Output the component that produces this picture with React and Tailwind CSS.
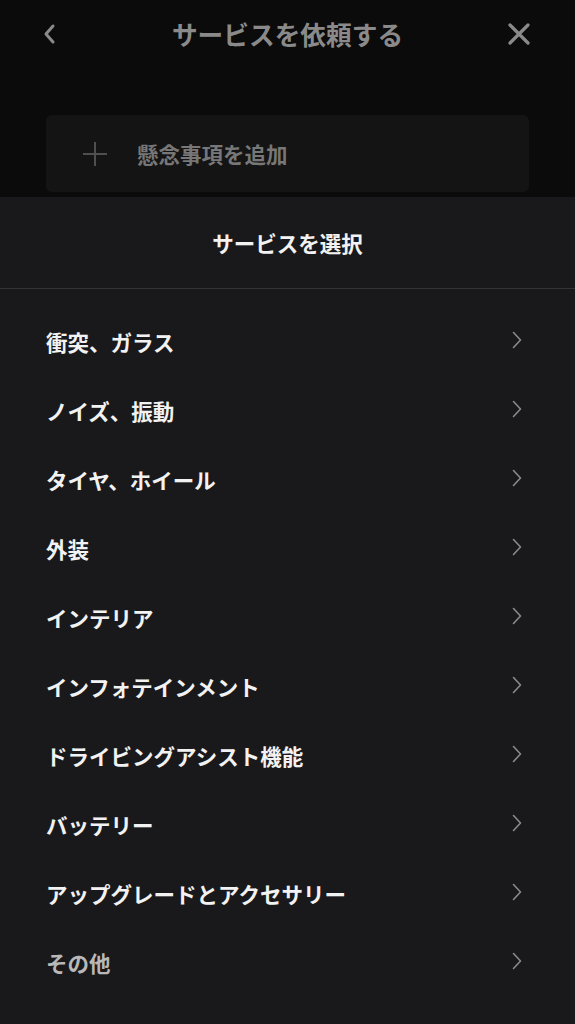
import React from "react";

const items = [
  "衝突、ガラス",
  "ノイズ、振動",
  "タイヤ、ホイール",
  "外装",
  "インテリア",
  "インフォテインメント",
  "ドライビングアシスト機能",
  "バッテリー",
  "アップグレードとアクセサリー",
  "その他",
];

function Chevron() {
  return (
    <svg width="12" height="18" viewBox="0 0 12 18" fill="none">
      <path d="M2.5 1.5 L9.5 9 L2.5 16.5" stroke="#8a8a8c" strokeWidth="1.6" strokeLinecap="round" strokeLinejoin="round" />
    </svg>
  );
}

export default function App() {
  const font = { fontFamily: '"Noto Sans CJK JP", "Noto Sans", sans-serif' };
  return (
    <div className="w-[575px] h-[1024px] overflow-hidden bg-[#0b0b0b] flex flex-col" style={font}>
      <div className="h-[68px] grid grid-cols-[24px_1fr_24px] items-center px-[42px]">
        <svg width="16" height="22" viewBox="0 0 16 22" fill="none">
          <path d="M11 3 L4 11 L11 19" stroke="#8a8a8a" strokeWidth="3" strokeLinecap="round" strokeLinejoin="round" />
        </svg>
        <div className="text-center text-[25.7px] font-bold text-[#8a8a8a] leading-none">サービスを依頼する</div>
        <svg width="24" height="24" viewBox="0 0 24 24" fill="none" className="-ml-[2px]">
          <path d="M3 3 L21 21 M21 3 L3 21" stroke="#8a8a8a" strokeWidth="3.2" strokeLinecap="round" />
        </svg>
      </div>
      <div className="px-[46px] pt-[47px]">
        <div className="h-[77px] rounded-[6px] bg-[#141414] flex items-center pl-[36px] gap-[29px]">
          <svg width="26" height="26" viewBox="0 0 26 26" fill="none">
            <path d="M13 1 V25 M1 13 H25" stroke="#4f4f4f" strokeWidth="2" />
          </svg>
          <span className="text-[21.5px] font-bold text-[#777777] leading-none">懸念事項を追加</span>
        </div>
      </div>
      <div className="mt-[5px] flex-1 bg-[#19191b] flex flex-col">
        <div className="h-[92px] flex items-center justify-center text-[21.5px] font-bold text-[#f2f2f2] border-b border-[#333336] pt-[2px]">
          サービスを選択
        </div>
        <div className="pt-[18px] flex flex-col">
          {items.map((t, i) => (
            <div key={t} className="h-[69px] flex items-center justify-between pl-[46px] pr-[52px]">
              <span className={`text-[21.5px] font-bold leading-none ${i === items.length - 1 ? "text-[#b8b8b8]" : "text-[#f2f2f2]"}`}>{t}</span>
              <span className="-mt-[4px]"><Chevron /></span>
            </div>
          ))}
        </div>
      </div>
    </div>
  );
}
